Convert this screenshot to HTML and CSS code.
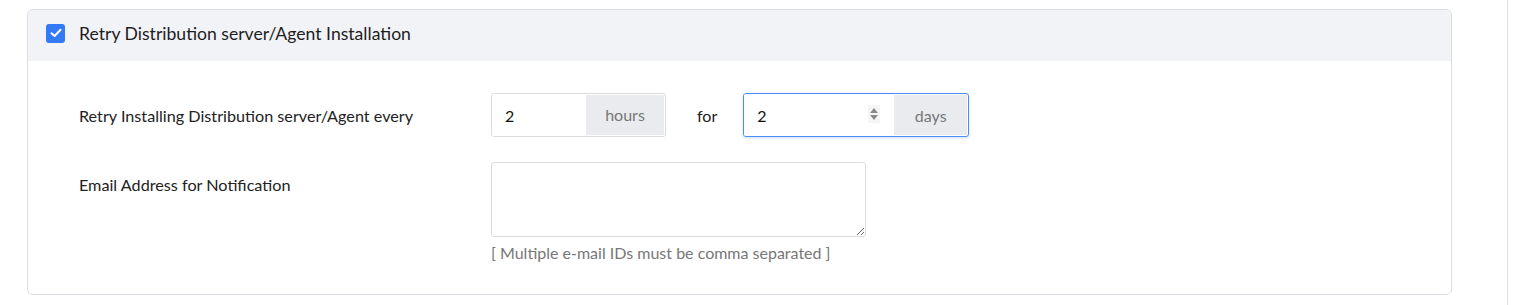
FILE: index.html
```html
<!DOCTYPE html>
<html lang="en">
<head>
  <meta charset="UTF-8">
  <meta name="viewport" content="width=device-width, initial-scale=1.0">
  <title>Retry Settings</title>
  <link rel="stylesheet" href="styles.css">
</head>
<body>
  <div class="page">
    <div class="card">
      <div class="card-header">
        <span class="check">
          <svg width="12" height="10" viewBox="0 0 12 10"><path d="M1.5 5.2 L4.6 8 L10.5 1.8" fill="none" stroke="#fff" stroke-width="2" stroke-linecap="round" stroke-linejoin="round"/></svg>
        </span>
        <span class="card-title">Retry Distribution server/Agent Installation</span>
      </div>
      <div class="card-body">
        <div class="row">
          <label class="label">Retry Installing Distribution server/Agent every</label>
          <div class="field-line">
            <div class="input-group hours">
              <input type="text" value="2">
              <span class="addon">hours</span>
            </div>
            <span class="for">for</span>
            <div class="input-group days focused">
              <input type="text" value="2">
              <span class="spin">
                <svg width="10" height="16" viewBox="0 0 10 16"><path d="M5 2 L9 7 L1 7 Z M1 9 L9 9 L5 14 Z" fill="#8a8a8a"/></svg>
              </span>
              <span class="addon">days</span>
            </div>
          </div>
        </div>
        <div class="row email-row">
          <label class="label">Email Address for Notification</label>
          <div>
            <textarea class="email"></textarea>
            <div class="help">[ Multiple e-mail IDs must be comma separated ]</div>
          </div>
        </div>
      </div>
    </div>
  </div>
</body>
</html>
```

FILE: styles.css
```css
body {
  margin: 0;
  font-family: Lato, "Open Sans", sans-serif;
  color: #222;
  background-color: #fff;
}
.page {
  width: 1508px;
  height: 305px;
  box-sizing: border-box;
  padding: 9px 0 0 27px;
  border-right: 1px solid #e2e2e6;
}
.card {
  width: 1425px;
  height: 286px;
  box-sizing: border-box;
  border: 1px solid #dcdde2;
  border-radius: 6px;
  overflow: hidden;
}
.card-header {
  height: 51px;
  box-sizing: border-box;
  padding: 0 0 5px 18px;
  background-color: #f2f3f7;
  display: flex;
  align-items: center;
}
.check {
  width: 19px;
  height: 19px;
  border-radius: 3px;
  background-color: #3479f5;
  display: flex;
  align-items: center;
  justify-content: center;
  margin-right: 14px;
}
.card-title {
  font-size: 17.6px;
  color: #1e1e1e;
}
.card-body {
  padding: 32px 0 0 51px;
}
.row {
  display: flex;
  align-items: center;
}
.label {
  width: 412px;
  font-size: 16.2px;
  color: #222;
}
.field-line {
  display: flex;
  align-items: center;
}
.input-group {
  display: flex;
  height: 44px;
  box-sizing: border-box;
  border: 1px solid #dcdcdc;
  border-radius: 3px;
  overflow: hidden;
}
.input-group input {
  border: none;
  outline: none;
  font-family: Lato, sans-serif;
  font-size: 16px;
  color: #111;
  padding: 0 0 0 13px;
  box-sizing: border-box;
  background: #fff;
}
.hours input {
  width: 94px;
}
.days input {
  width: 124px;
}
.input-group.focused {
  border-color: #4d8cf5;
  box-shadow: 0 1px 3px rgba(77, 140, 245, 0.3);
}
.spin {
  width: 12px;
  height: 18px;
  margin: 0 14px 2px 0;
  align-self: center;
  background-color: #f5f5f5;
  display: flex;
  align-items: center;
  justify-content: center;
}
.addon {
  background-color: #e9ebee;
  color: #777;
  font-size: 16px;
  display: flex;
  align-items: center;
  justify-content: center;
  margin: 1px 1px 1px 0;
}
.hours .addon {
  width: 78px;
  padding-bottom: 2px;
}
.days .addon {
  width: 73px;
  padding-top: 1px;
}
.for {
  font-size: 16px;
  margin: 0 26px 0 31px;
  color: #222;
}
.email-row {
  align-items: flex-start;
  margin-top: 25px;
}
.email-row .label {
  padding-top: 13px;
}
.email {
  display: block;
  width: 375px;
  height: 75px;
  box-sizing: border-box;
  border: 1px solid #dcdcdc;
  border-radius: 3px;
  margin: 0;
}
.help {
  margin-top: 6px;
  font-size: 16px;
  color: #777;
}
```
